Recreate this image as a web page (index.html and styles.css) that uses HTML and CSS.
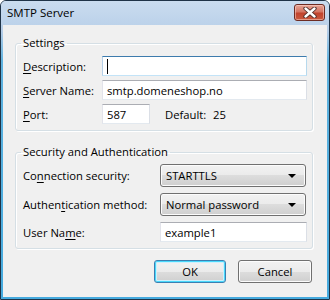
FILE: index.html
```html
<!DOCTYPE html>
<html lang="en">
<head>
    <meta charset="UTF-8">
    <title>SMTP Server</title>
    <link rel="stylesheet" href="styles.css">
</head>
<body>
    <div class="window">
        <div class="titlebar">
            <span class="title">SMTP Server</span>
            <span class="close">
                <svg width="14" height="11" viewBox="0 0 14 11">
                    <path d="M2.5 1.5 L11.5 9.5 M11.5 1.5 L2.5 9.5" stroke="#4a2a26" stroke-width="4.2" stroke-linecap="round"/>
                    <path d="M2.5 1.5 L11.5 9.5 M11.5 1.5 L2.5 9.5" stroke="#fff" stroke-width="2.4" stroke-linecap="round"/>
                </svg>
            </span>
        </div>
        <div class="client">
            <fieldset class="group settings">
                <legend>Settings</legend>
                <div class="row">
                    <label class="lbl"><u>D</u>escription:</label>
                    <div class="textbox wide focused"><span class="caret"></span></div>
                </div>
                <div class="row">
                    <label class="lbl"><u>S</u>erver Name:</label>
                    <div class="textbox wide">smtp.domeneshop.no</div>
                </div>
                <div class="row">
                    <label class="lbl"><u>P</u>ort:</label>
                    <div class="textbox port">587</div>
                    <span class="default-lbl">Default:</span>
                    <span class="default-val">25</span>
                </div>
            </fieldset>

            <fieldset class="group security">
                <legend>Security and Authentication</legend>
                <div class="row tall">
                    <label class="lbl">Co<u>n</u>nection security:</label>
                    <div class="dropdown"><span>STARTTLS</span><span class="arrow"></span></div>
                </div>
                <div class="row tall">
                    <label class="lbl">Authen<u>t</u>ication method:</label>
                    <div class="dropdown"><span>Normal password</span><span class="arrow"></span></div>
                </div>
                <div class="row">
                    <label class="lbl">User Na<u>m</u>e:</label>
                    <div class="textbox user">example1</div>
                </div>
            </fieldset>

            <div class="buttons">
                <button class="btn btn-default">OK</button>
                <button class="btn btn-cancel">Cancel</button>
            </div>
        </div>
    </div>
</body>
</html>
```

FILE: styles.css
```css
body {
    margin: 0;
    font-family: "Open Sans", "Noto Sans", sans-serif;
    font-size: 11.25px;
    color: #000;
}
.window {
    width: 330px;
    height: 300px;
    box-sizing: border-box;
    border: 1px solid #1f3347;
    border-radius: 6px 6px 0 0;
    padding: 0 2px 2px 2px;
    background: linear-gradient(#c8dbef, #b6cde7 30px, #5fb2df 60px, #45aade);
    display: flex;
    flex-direction: column;
}
.titlebar {
    height: 24px;
    display: flex;
    align-items: center;
    justify-content: space-between;
    background: linear-gradient(#cadcef, #bcd2ea);
    margin: 0 -2px;
    padding: 0 4px 0 6px;
    border-radius: 5px 5px 0 0;
}
.title {
    font-size: 11.5px;
    color: #000;
    margin-top: -1px;
}
.close {
    width: 29px;
    height: 15px;
    margin-top: -2px;
    border: 1px solid #6d2b22;
    border-radius: 3px;
    background: linear-gradient(#e8a596, #d47563 45%, #c1432d 55%, #c9593f);
    box-shadow: inset 0 0 0 1px rgba(255, 220, 210, 0.5);
    display: flex;
    align-items: center;
    justify-content: center;
}
.close svg {
    display: block;
}
.client {
    flex: 1;
    background: #f0f0f0;
    display: flex;
    flex-direction: column;
}
.group {
    margin: 10px 14px 0 12px;
    padding: 5px 4px 6px 7px;
    border: 1px solid #d5dfe5;
    border-radius: 3px;
    box-shadow: 1px 1px 0 #fff, inset 1px 1px 0 #fff;
    display: flex;
    flex-direction: column;
    gap: 4px;
}
.security {
    margin-top: 13px;
    padding-top: 4px;
    gap: 6px;
}
.group legend {
    padding: 0 2px;
    margin-left: -2px;
    line-height: 16px;
    color: #000;
}
.row {
    display: flex;
    align-items: center;
    height: 20px;
}
.row.tall {
    height: 23px;
}
.lbl {
    width: 79px;
    flex: none;
    white-space: nowrap;
}
.security .lbl {
    width: 137px;
}
.lbl u {
    text-decoration-thickness: 1px;
    text-underline-offset: 2px;
}
.textbox {
    flex: none;
    height: 20px;
    box-sizing: border-box;
    background: #fff;
    border: 1px solid;
    border-color: #abadb3 #dbdfe6 #e3e9ef #e2e3ea;
    padding: 0 4px;
    display: flex;
    align-items: center;
    white-space: nowrap;
}
.textbox.focused {
    border-color: #3d7bad #b7d9ed #c3e3f7 #b5cfe7;
}
.wide {
    width: 205px;
}
.port {
    width: 48px;
}
.user {
    width: 147px;
}
.caret {
    width: 1px;
    height: 15px;
    background: #000;
}
.default-lbl {
    flex: none;
    margin-left: 15px;
    width: 48px;
}
.dropdown {
    flex: none;
    width: 146px;
    height: 23px;
    box-sizing: border-box;
    border: 1px solid #707070;
    border-radius: 3px;
    background: linear-gradient(#f2f2f2, #ebebeb 50%, #dddddd 50%, #cfcfcf);
    box-shadow: inset 0 0 0 1px #fcfcfc;
    padding: 0 9px 0 5px;
    display: flex;
    align-items: center;
    justify-content: space-between;
}
.arrow {
    width: 0;
    height: 0;
    border-left: 4px solid transparent;
    border-right: 4px solid transparent;
    border-top: 4px solid #000;
}
.buttons {
    display: flex;
    justify-content: flex-end;
    gap: 12px;
    margin: 11px 15px 0 0;
}
.btn {
    height: 23px;
    font-family: inherit;
    font-size: 11.25px;
    color: #000;
    border: 1px solid #707070;
    border-radius: 3px;
    background: linear-gradient(#f2f2f2, #ebebeb 50%, #dddddd 50%, #cfcfcf);
    box-shadow: inset 0 0 0 1px #fcfcfc;
    padding: 0;
}
.btn-default {
    width: 72px;
    border-color: #3c7fb1;
    box-shadow: inset 0 0 0 1px #48d8fb, inset 0 0 0 2px #cdf0fd;
}
.btn-cancel {
    width: 74px;
}
```
